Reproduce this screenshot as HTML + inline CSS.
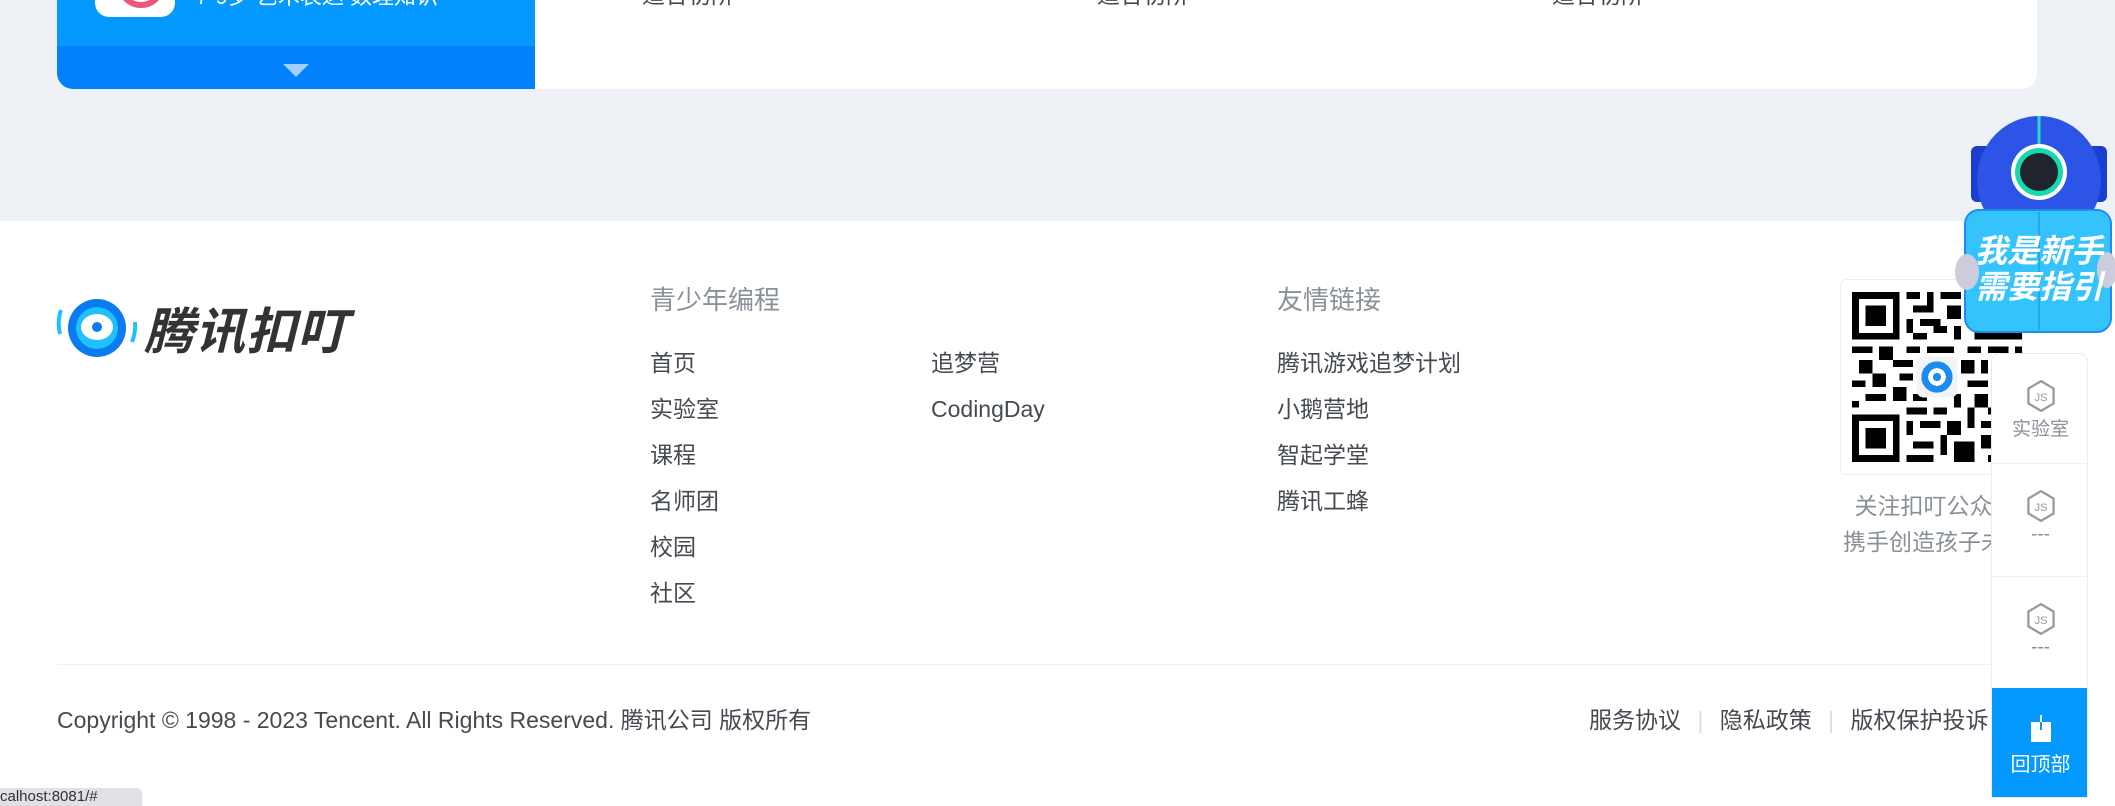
<!DOCTYPE html>
<html><head><meta charset="utf-8"><style>
*{margin:0;padding:0;box-sizing:border-box}
body{width:2115px;height:806px;overflow:hidden;background:#fff;font-family:"Liberation Sans","Noto Sans CJK SC",sans-serif;position:relative}
.abs{position:absolute}
.gray{left:0;top:0;width:2115px;height:221px;background:#eef1f6}
.card{left:57px;top:-20px;width:1980px;height:109px;background:#fff;border-radius:0 0 16px 16px;overflow:hidden}
.blue{left:0;top:0;width:478px;height:109px;background:#0399fe;border-radius:0 0 0 16px;overflow:hidden}
.blue2{left:0;top:66px;width:478px;height:43px;background:#0181fe}
.tri{left:226px;top:84px;width:0;height:0;border-left:13px solid transparent;border-right:13px solid transparent;border-top:13px solid #a0d0ff}
.ic{left:38px;top:0;width:80px;height:37px;background:#fff;border-radius:0 0 14px 14px;overflow:hidden}
.ic:after{content:"";position:absolute;left:22px;top:-20px;width:36px;height:36px;border:6px solid #f0567a;border-radius:50%}
.h{color:#8a9099;font-size:26px}
.l{color:#454a52;font-size:23px}
.side{left:1991px;top:353px;width:97px;height:445px;background:#fff;border:1px solid #e8eaee;border-radius:8px 8px 0 0;overflow:hidden}
.si{position:absolute;left:0;width:97px;text-align:center;color:#8a9099;font-size:19px}
.js{display:block;margin:0 auto 2px;width:30px;height:32px}
</style></head><body>
<div class="abs gray"></div>
<div class="abs card">
 <div class="abs blue"><div class="abs ic"></div>
 <div class="abs" style="left:139px;top:5px;color:#fff;font-size:22px;line-height:24px;white-space:nowrap">7-9岁 艺术表达 数理知识</div>
 <div class="abs blue2"></div><div class="abs tri"></div></div>
 <div class="abs l" style="left:585px;top:-4px">适合初阶</div>
 <div class="abs l" style="left:1040px;top:-4px">适合初阶</div>
 <div class="abs l" style="left:1495px;top:-4px">适合初阶</div>
</div>

<!-- logo -->
<svg class="abs" style="left:55px;top:298px" width="84" height="64" viewBox="0 0 84 64">
<ellipse cx="42" cy="30" rx="29" ry="29" fill="#0a7bf0"/><circle cx="42" cy="30" r="21" fill="#1fc0ff"/><ellipse cx="42" cy="29" rx="16" ry="13" fill="#fff"/><circle cx="42" cy="29" r="5" fill="#0a7bf0"/>
<path d="M6 12 Q2 24 5 36" stroke="#1fc0ff" stroke-width="4" fill="none"/><path d="M80 24 Q81 34 77 44" stroke="#1fc0ff" stroke-width="4" fill="none"/></svg>
<div class="abs" style="left:144px;top:292px;font-size:50px;font-weight:bold;font-style:italic;color:#333;letter-spacing:1px;white-space:nowrap">腾讯扣叮</div>

<div class="abs h" style="left:650px;top:280px">青少年编程</div>
<div class="abs h" style="left:1277px;top:280px">友情链接</div>
<div class="abs l" style="left:650px;top:340px;line-height:46px">首页<br>实验室<br>课程<br>名师团<br>校园<br>社区</div>
<div class="abs l" style="left:931px;top:340px;line-height:46px">追梦营<br>CodingDay</div>
<div class="abs l" style="left:1277px;top:340px;line-height:46px">腾讯游戏追梦计划<br>小鹅营地<br>智起学堂<br>腾讯工蜂</div>

<!-- QR -->
<div class="abs" style="left:1840px;top:279px;width:183px;height:196px;border:1px solid #eceef2;border-radius:6px;background:#fff"></div>
<svg class="abs" style="left:1851px;top:292px" width="172" height="170" viewBox="0 0 25 25" shape-rendering="crispEdges">
<rect width="25" height="25" fill="#fff"/>
<g fill="#000">
<rect x="0" y="0" width="7" height="7"/><rect x="0" y="18" width="7" height="7"/><rect x="18" y="0" width="7" height="7"/>
<path d="M8 0h2v1h-2zM11 0h1v2h-1zM13 0h3v1h-3zM9 2h3v1h-3zM14 2h2v2h-2zM8 4h1v2h-1zM10 4h3v1h-3zM12 5h2v1h-2zM15 5h1v2h-1zM9 6h2v1h-2zM0 8h3v1h-3zM4 8h2v2h-2zM8 8h2v1h-2zM11 8h4v1h-4zM17 8h2v1h-2zM20 8h3v1h-3zM24 8h1v2h-1zM1 10h2v2h-2zM6 10h3v1h-3zM10 10h1v3h-1zM13 10h1v1h-1zM16 10h2v2h-2zM19 10h1v2h-1zM21 10h2v1h-2zM0 13h2v1h-2zM3 12h2v2h-2zM7 12h2v1h-2zM17 13h3v1h-3zM21 12h3v1h-3zM2 15h3v1h-3zM6 14h2v2h-2zM9 15h2v1h-2zM15 15h1v2h-1zM18 15h2v2h-2zM22 14h3v1h-3zM0 16h1v1h-1zM8 17h3v1h-3zM12 17h2v1h-2zM17 17h1v3h-1zM20 17h2v1h-2zM23 16h2v2h-2zM8 19h1v2h-1zM10 19h3v1h-3zM14 19h2v2h-2zM19 19h2v1h-2zM22 19h1v3h-1zM9 22h3v1h-3zM13 21h1v3h-1zM15 22h3v3h-3zM19 21h2v2h-2zM23 23h2v2h-2zM8 24h4v1h-4zM20 24h2v1h-2z"/></g>
<rect x="1" y="1" width="5" height="5" fill="#fff"/><rect x="1" y="19" width="5" height="5" fill="#fff"/><rect x="19" y="1" width="5" height="5" fill="#fff"/>
<rect x="2" y="2" width="3" height="3" fill="#000"/><rect x="2" y="20" width="3" height="3" fill="#000"/><rect x="20" y="2" width="3" height="3" fill="#000"/>
<rect x="9.5" y="9.5" width="6" height="6" rx="1" fill="#f2f4f7"/><circle cx="12.5" cy="12.5" r="2.3" fill="#1a8cf0"/><circle cx="12.5" cy="12.5" r="1.3" fill="#fff"/><circle cx="12.5" cy="12.5" r=".6" fill="#1a8cf0"/></svg>
<div class="abs" style="left:1820px;top:488px;width:230px;color:#8a9099;font-size:23px;line-height:36px;text-align:center">关注扣叮公众号<br>携手创造孩子未来</div>

<div class="abs" style="left:57px;top:664px;width:1980px;height:1px;background:#eef0f3"></div>
<div class="abs l" style="left:57px;top:701px;white-space:nowrap">Copyright © 1998 - 2023 Tencent. All Rights Reserved. 腾讯公司 版权所有</div>
<div class="abs l" style="left:1589px;top:701px;white-space:nowrap">服务协议 <span style="color:#ddd;margin:0 10px">|</span> 隐私政策 <span style="color:#ddd;margin:0 10px">|</span> 版权保护投诉</div>

<!-- sidebar -->
<div class="abs side">
 <div class="si" style="top:26px"><svg class="js" viewBox="0 0 26 28"><path d="M13 1L24 7.5V20.5L13 27L2 20.5V7.5Z" fill="none" stroke="#999" stroke-width="2"/><text x="13" y="18.5" font-size="10" text-anchor="middle" fill="#999" font-family="Liberation Sans">JS</text></svg>实验室</div>
 <div style="position:absolute;top:109px;left:0;width:97px;height:1px;background:#eef0f3"></div>
 <div class="si" style="top:136px"><svg class="js" viewBox="0 0 26 28"><path d="M13 1L24 7.5V20.5L13 27L2 20.5V7.5Z" fill="none" stroke="#999" stroke-width="2"/><text x="13" y="18.5" font-size="10" text-anchor="middle" fill="#999" font-family="Liberation Sans">JS</text></svg>---</div>
 <div style="position:absolute;top:222px;left:0;width:97px;height:1px;background:#eef0f3"></div>
 <div class="si" style="top:249px"><svg class="js" viewBox="0 0 26 28"><path d="M13 1L24 7.5V20.5L13 27L2 20.5V7.5Z" fill="none" stroke="#999" stroke-width="2"/><text x="13" y="18.5" font-size="10" text-anchor="middle" fill="#999" font-family="Liberation Sans">JS</text></svg>---</div>
 <div style="position:absolute;top:334px;left:0;width:97px;height:111px;background:#0399fe;color:#fff;font-size:20px;text-align:center;padding-top:26px">
  <svg width="24" height="28" viewBox="0 0 24 28" style="display:block;margin:0 auto 6px"><rect x="2" y="8" width="20" height="20" fill="#fff"/><path d="M12 2V16M7 7L12 2L17 7" stroke="#0399fe" stroke-width="2" fill="none"/><path d="M12 1V8" stroke="#fff" stroke-width="2"/></svg>回顶部</div>
</div>

<!-- robot -->
<svg class="abs" style="left:1955px;top:108px" width="160" height="226" viewBox="0 0 160 226">
<rect x="16" y="38" width="20" height="56" rx="6" fill="#1a3fd0"/><rect x="132" y="38" width="20" height="56" rx="6" fill="#1a3fd0"/>
<ellipse cx="84" cy="72" rx="62" ry="64" fill="#2c55e8"/>
<line x1="84" y1="8" x2="84" y2="40" stroke="#2ed8c8" stroke-width="3"/>
<circle cx="84" cy="64" r="28" fill="#fff"/><circle cx="84" cy="64" r="24" fill="#17d9b0"/><circle cx="84" cy="64" r="19" fill="#20242c"/>
<rect x="10" y="102" width="146" height="122" rx="14" fill="#35c3fb" stroke="#1e8cf0" stroke-width="2"/>
<line x1="84" y1="104" x2="84" y2="222" stroke="#26a8f0" stroke-width="2"/>
<ellipse cx="12" cy="164" rx="12" ry="18" fill="#ccd"/><ellipse cx="152" cy="162" rx="10" ry="18" fill="#ccd"/>
<text x="84" y="154" font-size="32" font-weight="bold" font-style="italic" text-anchor="middle" fill="#fff" font-family="Liberation Sans,Noto Sans CJK SC,sans-serif">我是新手</text>
<text x="84" y="190" font-size="32" font-weight="bold" font-style="italic" text-anchor="middle" fill="#fff" font-family="Liberation Sans,Noto Sans CJK SC,sans-serif">需要指引</text>
</svg>

<div class="abs" style="left:0;top:788px;width:142px;height:18px;background:#dfe1e5;border-radius:0 6px 0 0;font-size:15px;color:#333;white-space:nowrap;overflow:hidden">calhost:8081/#</div>
</body></html>
